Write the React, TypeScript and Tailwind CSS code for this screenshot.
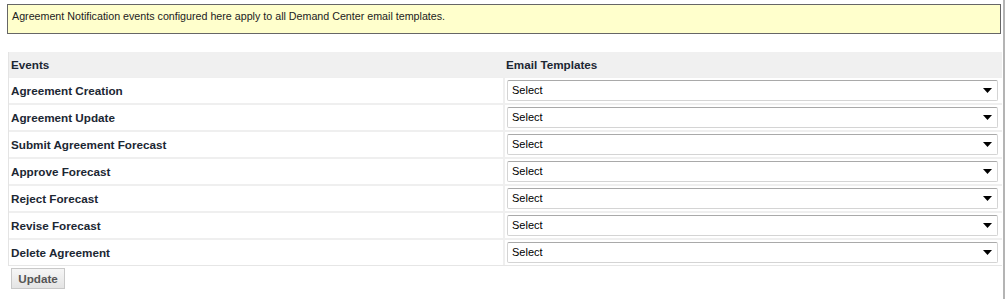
import React from "react";

const events = [
  "Agreement Creation",
  "Agreement Update",
  "Submit Agreement Forecast",
  "Approve Forecast",
  "Reject Forecast",
  "Revise Forecast",
  "Delete Agreement",
];

function SelectBox() {
  return (
    <div className="flex h-[21px] w-[491px] items-center justify-between rounded-[2px] border border-[#d4d4d4] border-t-[#a9a9a9] bg-white pl-[4px] pr-[5px]">
      <span className="text-[11px] text-black">Select</span>
      <svg width="9" height="5" viewBox="0 0 9 5">
        <path d="M0 0H9L4.5 5Z" fill="#000" />
      </svg>
    </div>
  );
}

export default function App() {
  return (
    <div
      className="relative h-[299px] w-[1005px] bg-white"
      style={{ fontFamily: '"Liberation Sans", Arial, sans-serif' }}
    >
      <div className="absolute right-0 top-0 h-full w-[2px] bg-[#b4b4b4]" />
      <div className="pl-[7px] pr-[4px] pt-[4px]">
        <div className="flex h-[30px] w-[994px] items-start border border-[#666] bg-[#ffffcc] pl-[4px] pt-[3px] text-[10.7px] text-[#222]">
          Agreement Notification events configured here apply to all Demand Center email templates.
        </div>
      </div>
      <div className="ml-[8px] mt-[18px] w-[994px] border-l border-[#e4e4e4] bg-[#efefef]">
        <div className="flex h-[25px] items-center bg-[#f0f0f0] text-[11.7px] font-bold text-[#1c2733]">
          <div className="w-[495px] pl-[2px]">Events</div>
          <div className="pl-[2px]">Email Templates</div>
        </div>
        <div className="flex flex-col gap-[2px] pt-[1px]">
          {events.map((e) => (
            <div key={e} className="flex h-[25px] gap-[2px]">
              <div className="flex w-[494px] items-center bg-white pl-[2px] text-[11.7px] font-bold text-[#1c2733]">
                {e}
              </div>
              <div className="flex flex-1 items-center bg-white pl-[2px]">
                <SelectBox />
              </div>
            </div>
          ))}
        </div>
        <div className="h-[1px] bg-[#e6e6e6]" />
      </div>
      <div className="bg-white pl-[11px] pt-[2px]">
        <button className="flex h-[21px] w-[54px] items-center justify-center border border-[#c8c8c8] bg-gradient-to-b from-[#f6f6f6] to-[#e4e4e4] text-[11.7px] font-bold text-[#555]">
          Update
        </button>
      </div>
    </div>
  );
}
